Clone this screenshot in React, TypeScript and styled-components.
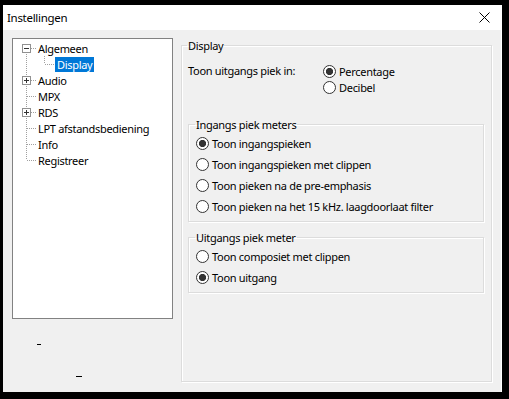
import React from 'react';
import styled, { createGlobalStyle } from 'styled-components';

const GlobalStyle = createGlobalStyle`
  html, body {
    margin: 0;
    padding: 0;
    background: #000;
  }
  body {
    font-family: "Noto Sans", "Segoe UI", sans-serif;
    font-size: 11px;
    letter-spacing: -0.3px;
    color: #000;
  }
`;

const Window = styled.div`
  margin: 5px 0 0 3px;
  width: 498px;
  height: 387px;
  background: #f0f0f0;
  border-right: 1px solid #fff;
  display: flex;
  flex-direction: column;
`;

const TitleBar = styled.div`
  height: 25px;
  flex: none;
  background: #fff;
  display: flex;
  align-items: center;
  justify-content: space-between;
  padding: 0 11px 0 4px;
`;

const Title = styled.span`
  font-size: 11.5px;
`;

const CloseIcon = styled.svg`
  display: block;
`;

const Body = styled.div`
  flex: 1;
  display: flex;
  gap: 8px;
  padding: 8px 9px 0 9px;
`;

const LeftColumn = styled.div`
  display: flex;
  flex-direction: column;
`;

const TreeBox = styled.div`
  width: 161px;
  height: 281px;
  box-sizing: border-box;
  background: #fff;
  border: 1px solid #828282;
  padding-top: 1px;
`;

const TreeRow = styled.div`
  display: flex;
  align-items: center;
  height: 16px;
`;

const Gutter = styled.svg`
  display: block;
  flex: none;
`;

const NodeLabel = styled.span<{ $selected?: boolean }>`
  padding: 0 2px;
  line-height: 15px;
  white-space: nowrap;
  background: ${p => (p.$selected ? '#0078d7' : 'transparent')};
  color: ${p => (p.$selected ? '#fff' : '#000')};
`;

const Mark = styled.span<{ $w: number; $left: number; $top: number }>`
  display: block;
  width: ${p => p.$w}px;
  height: 1px;
  background: #000;
  margin-left: ${p => p.$left}px;
  margin-top: ${p => p.$top}px;
`;

const Group = styled.fieldset<{ $w?: number; $h?: number }>`
  margin: 0;
  box-sizing: border-box;
  width: ${p => (p.$w ? `${p.$w}px` : 'auto')};
  height: ${p => (p.$h ? `${p.$h}px` : 'auto')};
  border: 1px solid #dcdcdc;
  border-radius: 0;
  box-shadow: inset 1px 1px 0 #fff, 1px 1px 0 #fff;
  padding: 0 7px 4px 6px;
  min-width: 0;
`;

const Legend = styled.legend`
  padding: 0 1px;
  margin-left: -1px;
  line-height: 15px;
`;

const InnerGroup = styled(Group)<{ $gapTop: number }>`
  margin-top: ${p => p.$gapTop}px;
  padding: 1px 7px 4px 7px;
`;

const OptionGrid = styled.div`
  display: grid;
  grid-template-columns: 135px auto;
  margin-top: 10px;
`;

const OptionLabel = styled.span`
  line-height: 16px;
`;

const RadioStack = styled.div`
  display: flex;
  flex-direction: column;
`;

const RadioRow = styled.label<{ $h: number }>`
  display: flex;
  align-items: center;
  gap: 3px;
  height: ${p => p.$h}px;
  white-space: nowrap;
`;

const RadioCircle = styled.span<{ $checked?: boolean }>`
  flex: none;
  width: 13px;
  height: 13px;
  box-sizing: border-box;
  border-radius: 50%;
  border: 1px solid #333;
  background: ${p =>
    p.$checked ? 'radial-gradient(circle, #333 0 3.3px, #fff 3.9px)' : '#fff'};
`;

type Seg = 'first' | 'mid' | 'last';

const RootGutter: React.FC<{ seg: Seg; box?: 'plus' | 'minus' }> = ({ seg, box }) => {
  const y1 = seg === 'first' ? 8 : 0;
  const y2 = seg === 'last' ? 8 : 16;
  return (
    <Gutter width={23} height={16}>
      <line x1={13.5} y1={y1} x2={13.5} y2={y2} stroke="#a0a0a0" strokeDasharray="1 1" />
      <line x1={14} y1={8.5} x2={23} y2={8.5} stroke="#a0a0a0" strokeDasharray="1 1" />
      {box && (
        <>
          <rect x={9.5} y={4.5} width={8} height={8} fill="#fff" stroke="#919191" />
          <line x1={11} y1={8.5} x2={16} y2={8.5} stroke="#333" />
          {box === 'plus' && <line x1={13.5} y1={6} x2={13.5} y2={11} stroke="#333" />}
        </>
      )}
    </Gutter>
  );
};

const ChildGutter: React.FC = () => (
  <Gutter width={42} height={16}>
    <line x1={13.5} y1={0} x2={13.5} y2={16} stroke="#a0a0a0" strokeDasharray="1 1" />
    <line x1={31.5} y1={0} x2={31.5} y2={8} stroke="#a0a0a0" strokeDasharray="1 1" />
    <line x1={32} y1={8.5} x2={42} y2={8.5} stroke="#a0a0a0" strokeDasharray="1 1" />
  </Gutter>
);

const Radio: React.FC<{ label: string; checked?: boolean; h: number }> = ({ label, checked, h }) => (
  <RadioRow $h={h}>
    <RadioCircle $checked={checked} />
    {label}
  </RadioRow>
);

const treeItems: { label: string; seg: Seg; box?: 'plus' | 'minus' }[] = [
  { label: 'Audio', seg: 'mid', box: 'plus' },
  { label: 'MPX', seg: 'mid' },
  { label: 'RDS', seg: 'mid', box: 'plus' },
  { label: 'LPT afstandsbediening', seg: 'mid' },
  { label: 'Info', seg: 'mid' },
  { label: 'Registreer', seg: 'last' },
];

const App: React.FC = () => (
  <>
    <GlobalStyle />
    <Window>
      <TitleBar>
        <Title>Instellingen</Title>
        <CloseIcon width={11} height={11} viewBox="0 0 11 11">
          <path d="M0.5 0.5 L10.5 10.5 M10.5 0.5 L0.5 10.5" stroke="#000" strokeWidth={1} fill="none" />
        </CloseIcon>
      </TitleBar>
      <Body>
        <LeftColumn>
          <TreeBox>
            <TreeRow>
              <RootGutter seg="first" box="minus" />
              <NodeLabel>Algemeen</NodeLabel>
            </TreeRow>
            <TreeRow>
              <ChildGutter />
              <NodeLabel $selected>Display</NodeLabel>
            </TreeRow>
            {treeItems.map(item => (
              <TreeRow key={item.label}>
                <RootGutter seg={item.seg} box={item.box} />
                <NodeLabel>{item.label}</NodeLabel>
              </TreeRow>
            ))}
          </TreeBox>
          <Mark $w={4} $left={25} $top={25} />
          <Mark $w={6} $left={64} $top={31} />
        </LeftColumn>
        <Group $w={313} $h={344}>
          <Legend>Display</Legend>
          <OptionGrid>
            <OptionLabel>Toon uitgangs piek in:</OptionLabel>
            <RadioStack>
              <Radio h={16} checked label="Percentage" />
              <Radio h={16} label="Decibel" />
            </RadioStack>
          </OptionGrid>
          <InnerGroup $gapTop={22}>
            <Legend>Ingangs piek meters</Legend>
            <Radio h={21} checked label="Toon ingangspieken" />
            <Radio h={21} label="Toon ingangspieken met clippen" />
            <Radio h={21} label="Toon pieken na de pre-emphasis" />
            <Radio h={21} label="Toon pieken na het 15 kHz. laagdoorlaat filter" />
          </InnerGroup>
          <InnerGroup $gapTop={8}>
            <Legend>Uitgangs piek meter</Legend>
            <Radio h={21} label="Toon composiet met clippen" />
            <Radio h={21} checked label="Toon uitgang" />
          </InnerGroup>
        </Group>
      </Body>
    </Window>
  </>
);

export default App;
